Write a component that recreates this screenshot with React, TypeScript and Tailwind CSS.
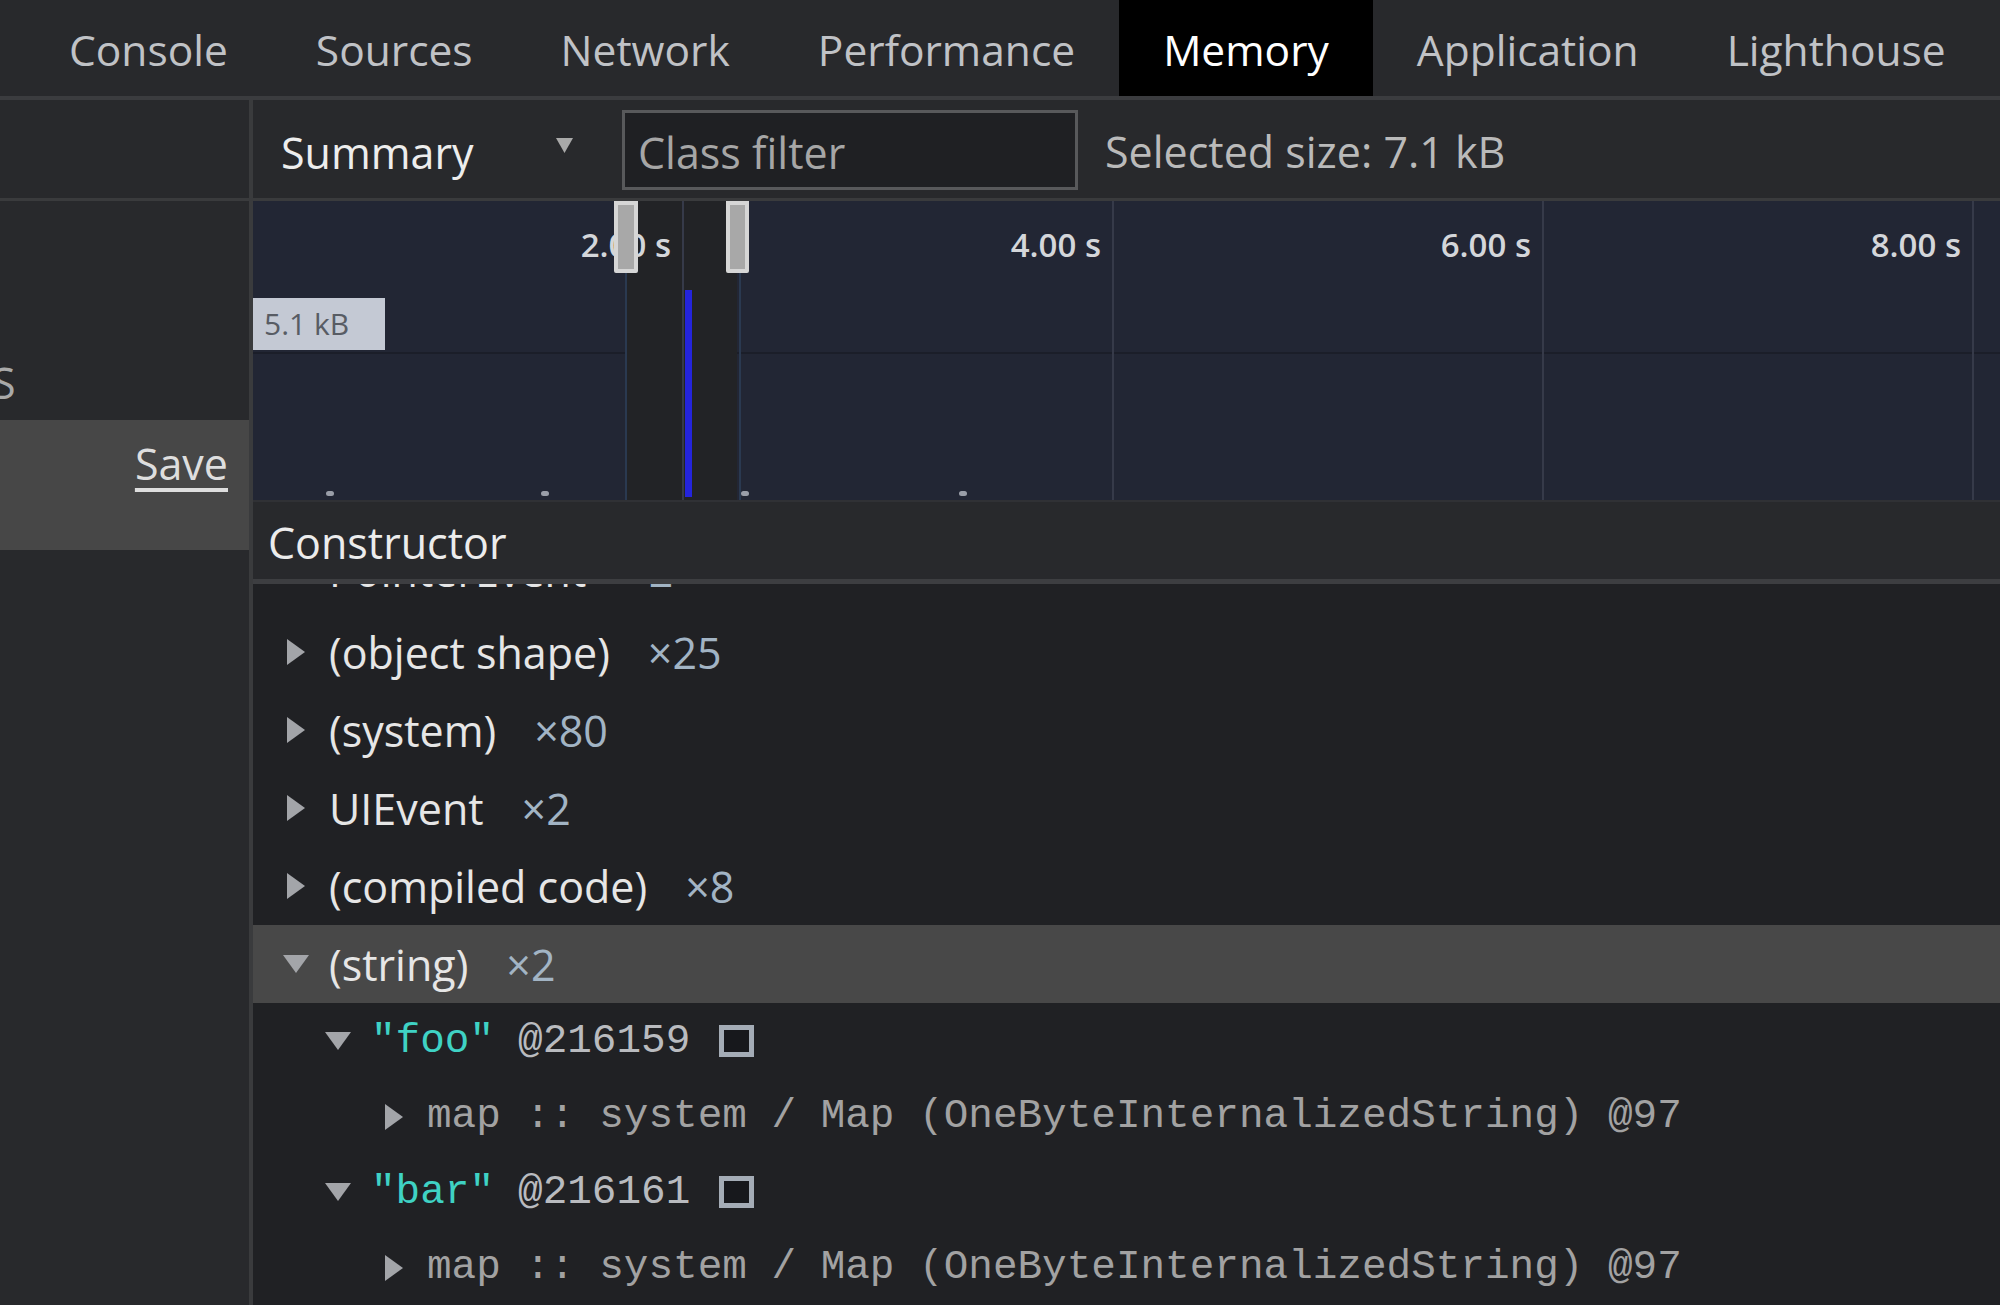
import React from "react";

const tabs = ["Console", "Sources", "Network", "Performance", "Memory", "Application", "Lighthouse"];

// timeline scale: 0 s sits at the left edge of the overview
const PX_PER_SEC = 215;
const ticks = [2, 4, 6, 8];
const dots = [73, 288, 488, 706];

const classes = [
  { name: "(object shape)", count: 25 },
  { name: "(system)", count: 80 },
  { name: "UIEvent", count: 2 },
  { name: "(compiled code)", count: 8 },
];

const strings = [
  { value: '"foo"', id: "@216159" },
  { value: '"bar"', id: "@216161" },
];

function TriRight() {
  return (
    <svg width="18" height="26" viewBox="0 0 18 26" className="shrink-0">
      <polygon points="0,0 18,13 0,26" fill="#a3a5a9" />
    </svg>
  );
}

function TriDown() {
  return (
    <svg width="26" height="18" viewBox="0 0 26 18" className="shrink-0">
      <polygon points="0,0 26,0 13,18" fill="#a3a5a9" />
    </svg>
  );
}

function ClassRow({ name, count, open, selected, className = "h-[78px]" }: {
  name: string; count: number; open?: boolean; selected?: boolean; className?: string;
}) {
  return (
    <div className={`flex shrink-0 items-center pl-[30px] ${className} ${selected ? "bg-[#484848]" : ""}`}>
      <span className="flex w-[46px]">{open ? <TriDown /> : <span className="ml-[4px] flex"><TriRight /></span>}</span>
      <span className="text-[#e6e6e6]">{name}</span>
      <span className="ml-[38px] text-[#a2b4c4]">×{count}</span>
    </div>
  );
}

export default function App() {
  return (
    <div className="flex h-[1305px] w-[2000px] flex-col overflow-hidden bg-[#202124] font-['Open_Sans',sans-serif] text-[43px] leading-none">
      {/* panel tabs */}
      <div className="flex h-[100px] shrink-0 border-b-[4px] border-[#3b3c3f] bg-[#28292c] pl-[25px] text-[42.5px]">
        {tabs.map((t) => (
          <div key={t}
            className={`flex h-full items-center px-[44px] pt-[5px] ${t === "Memory" ? "bg-black text-white" : "text-[#c0c2c6]"}`}>
            {t}
          </div>
        ))}
      </div>

      <div className="flex min-h-0 flex-1">
        {/* profiles sidebar */}
        <aside className="flex w-[253px] shrink-0 flex-col border-r-[4px] border-[#3a3b3d] bg-[#28292c]">
          <div className="h-[101px] shrink-0 border-b-[3px] border-[#3a3b3d]" />
          <div className="flex h-[219px] shrink-0 items-end overflow-hidden pb-[16px]">
            <span className="-ml-[8px] text-[#a9a9a9]">S</span>
          </div>
          <div className="flex h-[130px] shrink-0 justify-end bg-[#474747] pr-[21px] pt-[22px]">
            <span className="text-[#dedede] underline decoration-[4px] underline-offset-[8px]">Save</span>
          </div>
        </aside>

        <main className="flex min-w-0 flex-1 flex-col">
          {/* toolbar */}
          <div className="flex h-[101px] shrink-0 items-center border-b-[3px] border-[#3a3b3d] bg-[#28292c]">
            <div className="flex w-[350px] items-center justify-between pl-[28px] pr-[30px]">
              <span className="pt-[6px] text-[#ededed]">Summary</span>
              <svg width="17" height="15" viewBox="0 0 17 15" className="-mt-[8px]">
                <polygon points="0,0 17,0 8.5,15" fill="#a9a9a9" />
              </svg>
            </div>
            <div className="ml-[19px] mt-[2px] flex h-[80px] w-[456px] items-center border-[3px] border-[#58595b] bg-[#1f2023] px-[13px] pt-[5px] text-[#a6a6a6]">
              Class filter
            </div>
            <span className="ml-[27px] pt-[5px] text-[#bababa]">Selected size: 7.1 kB</span>
          </div>

          {/* heap overview */}
          <div className="relative h-[299px] shrink-0 overflow-hidden bg-[#222634]">
            <div className="absolute left-0 right-0 top-[151px] h-[2px] bg-[#1b1e29]" />
            {/* selected window */}
            <div className="absolute bottom-0 left-[374px] top-0 w-[110px] bg-[#222326]" />
            <div className="absolute bottom-0 left-[372px] top-[72px] w-[2px] bg-[#2a3950]" />
            <div className="absolute bottom-0 left-[486px] top-[72px] w-[2px] bg-[#2a3950]" />
            {ticks.map((s) => (
              <div key={s} className="absolute bottom-0 top-0 w-[2px] bg-[#363a49]" style={{ left: s * PX_PER_SEC - 1 }} />
            ))}
            {ticks.map((s) => (
              <div key={s} className="absolute top-[27px] w-[200px] text-right text-[33px] font-semibold text-[#d4d6da]"
                style={{ left: s * PX_PER_SEC - 212 }}>
                {s.toFixed(2)} s
              </div>
            ))}
            {dots.map((x) => (
              <div key={x} className="absolute top-[290px] h-[5px] w-[8px] rounded-full bg-[#9a9ea8]" style={{ left: x }} />
            ))}
            <div className="absolute left-[-1px] top-[97px] flex h-[52px] w-[133px] items-center bg-[#c4c9d4] pl-[12px] text-[30px] text-[#585c64]">
              5.1 kB
            </div>
            <div className="absolute bottom-[3px] left-[432px] top-[89px] w-[7px] bg-[#2424dc]" />
            <div className="absolute left-[361px] top-0 h-[72px] w-[24px] rounded-b-[2px] border-[4px] border-[#d6d6d6] bg-[#a8a8a8]" />
            <div className="absolute left-[473px] top-0 h-[72px] w-[23px] rounded-b-[2px] border-[4px] border-[#d6d6d6] bg-[#a8a8a8]" />
          </div>

          {/* grid header */}
          <div className="flex h-[84px] shrink-0 items-center border-b-[5px] border-t-[2px] border-[#3d3e41] border-t-[#303135] bg-[#28292c] pl-[15px] pt-[4px] text-[#ececec]">
            Constructor
          </div>

          {/* grid body, scrolled so the first row sits under the header */}
          <div className="flex min-h-0 flex-1 flex-col overflow-hidden">
            <div className="-mt-[57px] flex flex-col">
              <ClassRow name="PointerEvent" count={2} className="h-[86px]" />
              {classes.map((c) => (
                <ClassRow key={c.name} name={c.name} count={c.count} />
              ))}
              <ClassRow name="(string)" count={2} open selected />
              {strings.map((s) => (
                <React.Fragment key={s.id}>
                  <div className="flex h-[76px] shrink-0 items-center pl-[72px] font-['Liberation_Mono',monospace] text-[41px]">
                    <span className="flex w-[46px]"><TriDown /></span>
                    <span className="text-[#3fd2c4]">{s.value}</span>
                    <span className="ml-[24px] text-[#b9bbbf]">{s.id}</span>
                    <span className="ml-[29px] h-[32px] w-[35px] border-[5px] border-[#a4acb6] bg-[#17181c]" />
                  </div>
                  <div className="flex h-[75px] shrink-0 items-center pl-[128px] font-['Liberation_Mono',monospace] text-[41px] text-[#a2a2a2]">
                    <span className="flex w-[46px]"><span className="ml-[4px] flex"><TriRight /></span></span>
                    <span className="whitespace-pre">map :: system / Map (OneByteInternalizedString) @97</span>
                  </div>
                </React.Fragment>
              ))}
            </div>
          </div>
        </main>
      </div>
    </div>
  );
}
